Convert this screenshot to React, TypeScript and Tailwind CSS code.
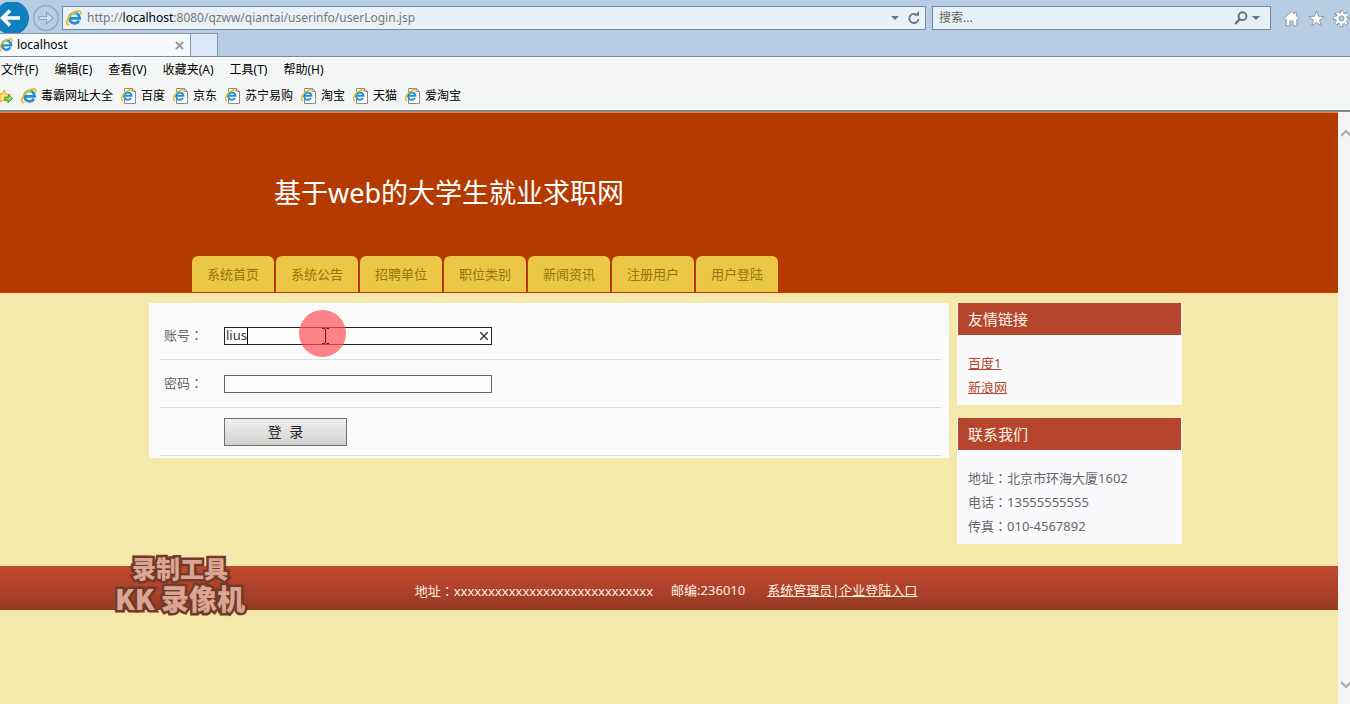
import { useState } from "react";

const menus = ["文件(F)", "编辑(E)", "查看(V)", "收藏夹(A)", "工具(T)", "帮助(H)"];
const favorites = ["百度", "京东", "苏宁易购", "淘宝", "天猫", "爱淘宝"];
const navs = ["系统首页", "系统公告", "招聘单位", "职位类别", "新闻资讯", "注册用户", "用户登陆"];
const contacts = [
  { label: "地址", value: "北京市环海大厦1602" },
  { label: "电话", value: "13555555555" },
  { label: "传真", value: "010-4567892" },
];

function IeLogo({ className }: { className?: string }) {
  return (
    <svg viewBox="0 0 16 16" className={className} fill="none">
      <path d="M13 10.800a5.200 5.200 0 1 1 .7-2.400H4.200" stroke="#2390d6" strokeWidth="2.800" />
      <path d="M4.200 5.800a5.200 5.200 0 0 1 7-1.400" stroke="#7accf2" strokeWidth="1" />
      <path d="M3.500 14.900C-1.500 14.500 1.500 7.500 6 3.800 10.500.2 15.800-.4 14.800 4.200" stroke="#f0bd1e" strokeWidth="1.800" />
    </svg>
  );
}

function PageIcon() {
  return (
    <svg viewBox="0 0 16 16" className="w-4 h-4" fill="none">
      <path d="M3.500.5h8l3 3v12h-11z" fill="#fff" stroke="#8c8c8c" />
      <path d="M11.500.5v3h3" stroke="#8c8c8c" />
      <path d="M10 10a3.700 3.700 0 1 1 .5-2.200H3.500" stroke="#2390d6" strokeWidth="2" />
      <path d="M2 12.800C-1.500 11.500 1.500 6 5 3.500 8 1.300 11.800.8 11 4" stroke="#f0bd1e" strokeWidth="1.500" />
    </svg>
  );
}

// full-width colon that sits in the middle of its cell
function Colon() {
  return <span className="font-['Noto_Sans_CJK_TC',sans-serif]">：</span>;
}

function Browser() {
  return (
    <div className="font-['Noto_Sans','Noto_Sans_CJK_SC',sans-serif] text-xs text-black">
      <div className="bg-[#b7cde4]">
        <div className="flex h-[33px] items-center pt-[3px]">
          <button type="button" aria-label="后退" className="w-[29px] h-[33px] shrink-0 overflow-hidden">
            <svg viewBox="0 0 29 33" className="w-[29px] h-[33px]">
              <circle cx="12" cy="16" r="17" fill="#0f80bd" />
              <path d="M20 16H3M10 8.500L2.500 16l7.500 7.500" fill="none" stroke="#fff" strokeWidth="3.500" />
            </svg>
          </button>
          <button type="button" aria-label="前进" className="w-[33px] h-[33px] shrink-0 flex items-center pl-1">
            <svg viewBox="0 0 26 26" className="w-[26px] h-[26px]" fill="none" stroke="#8ba6c2">
              <circle cx="13" cy="13" r="12.300" strokeWidth="1.300" />
              <path d="M6 11.500h7.500V7l6.500 6-6.500 6v-4.500H6z" fill="#d3e0ee" strokeWidth="1.200" />
            </svg>
          </button>
          <div className="flex h-6 flex-1 items-center border border-[#7189a2] bg-[#e9f1f6] pl-[3px] pr-1">
            <IeLogo className="w-4 h-4 shrink-0" />
            <p className="flex-1 pl-[5px] text-[#777]">
              http://<span className="text-black">localhost</span>:8080/qzww/qiantai/userinfo/userLogin.jsp
            </p>
            <svg viewBox="0 0 8 4" className="w-2 h-1 mr-2" fill="#6b737b">
              <path d="M0 0h8L4 4z" />
            </svg>
            <svg viewBox="0 0 14 14" className="w-[14px] h-[14px]" fill="none">
              <path d="M11.500 8A4.600 4.600 0 1 1 9 3.300" stroke="#6b737b" strokeWidth="1.800" />
              <path d="M7.200 4.800h4.800V0z" fill="#6b737b" />
            </svg>
          </div>
          <div className="ml-[6px] flex h-6 w-[339px] items-center border border-[#7189a2] bg-[#e6f0f5] px-[6px]">
            <input aria-label="搜索" placeholder="搜索..." className="min-w-0 flex-1 bg-transparent outline-none placeholder:text-[#666]" />
            <svg viewBox="0 0 14 14" className="w-[14px] h-[14px] mr-1" fill="none" stroke="#6b737b" strokeWidth="2">
              <circle cx="8.500" cy="5.200" r="3.900" />
              <path d="M5.800 8.200L1.200 13" strokeWidth="2.400" />
            </svg>
            <svg viewBox="0 0 8 4" className="w-2 h-1 mr-1" fill="#6b737b">
              <path d="M0 0h8L4 4z" />
            </svg>
          </div>
          <div className="ml-3 flex w-[67px] shrink-0 items-center gap-2 overflow-hidden">
            <svg viewBox="0 0 18 18" className="w-[17px] h-[17px] shrink-0" fill="#fdfdf8" stroke="#8796a6">
              <path d="M9 1.200L1 9l1.500 1.300.8-.7v7.100h4v-5h3.400v5h4V9.600l.8.7L17 9l-2.500-2.500V2.500h-2.200v1.800z" />
            </svg>
            <svg viewBox="0 0 18 18" className="w-[17px] h-[17px] shrink-0" fill="#fdfdf8" stroke="#8796a6">
              <path d="M9 1l2.100 5.600 6 .3-4.700 3.700 1.600 5.900L9 13.200l-5 3.300 1.600-5.900L.9 6.900l6-.3z" />
            </svg>
            <svg viewBox="0 0 18 18" className="w-[17px] h-[17px] shrink-0" fill="none">
              <circle cx="9" cy="9" r="7" stroke="#8796a6" strokeWidth="3.600" strokeDasharray="3.500 1.998" strokeDashoffset="1.750" />
              <circle cx="9" cy="9" r="5.800" stroke="#8796a6" strokeWidth="1.600" />
              <circle cx="9" cy="9" r="6.500" stroke="#fdfdf8" strokeWidth="3" strokeDasharray="2 3.105" strokeDashoffset="1" />
              <circle cx="9" cy="9" r="4.300" stroke="#fdfdf8" strokeWidth="3" />
              <circle cx="9" cy="9" r="2.700" stroke="#8796a6" />
            </svg>
          </div>
        </div>
        <div className="flex h-6 border-b border-[#7d8894]">
          <div className="flex w-[191px] items-center border-t border-r border-[#8297ad] bg-[#f6f9fb] pr-[6px]">
            <IeLogo className="w-[14px] h-[14px] -ml-px" />
            <span className="flex-1 pl-1">localhost</span>
            <button type="button" aria-label="关闭标签页">
              <svg viewBox="0 0 10 10" className="w-[9px] h-[9px]" stroke="#929292" strokeWidth="2">
                <path d="M1 1l8 8M9 1L1 9" />
              </svg>
            </button>
          </div>
          <button type="button" aria-label="新建标签页" className="w-[27px] border-t border-r border-[#8297ad] bg-[#dce8f8]"></button>
        </div>
      </div>
      <div className="border-b-2 border-[#85888a] bg-[#f4f6f5]">
        <div className="flex h-6 items-center gap-4 border-t-2 border-[#fafdfd] pl-px">
          {menus.map((m) => (
            <button type="button" key={m}>{m}</button>
          ))}
        </div>
        <div className="flex h-[29px] items-center gap-2">
          <svg viewBox="0 0 14 16" className="w-[13px] h-4" strokeLinejoin="round">
            <path d="M4.500 1.500L6.500 6l5 .4-3.800 3.400 1.200 5-4.400-2.500L0 14.500V5.500L2.500 6z" fill="#ffe27a" stroke="#e0981b" />
            <path d="M5 9.200h4V6.800l4.500 4-4.500 4v-2.400H5z" fill="#8fd85c" stroke="#43942a" />
          </svg>
          <a href="#" className="flex items-center gap-1">
            <IeLogo className="w-4 h-4" />毒霸网址大全
          </a>
          {favorites.map((f) => (
            <a href="#" key={f} className="flex items-center gap-1">
              <PageIcon />{f}
            </a>
          ))}
        </div>
      </div>
    </div>
  );
}

function SideBox({ title, children }: { title: string; children: React.ReactNode }) {
  return (
    <div className="border-x border-[#fafafd] bg-[#fafafd]">
      <h2 className="flex h-8 items-center bg-[#b5462d] px-[10px] text-[15px] text-[#fff3e6]">{title}</h2>
      <div className="px-[10px] pt-4 pb-[6px] leading-6">{children}</div>
    </div>
  );
}

function LoginForm() {
  const [name, setName] = useState("lius");
  const [pwd, setPwd] = useState("");

  return (
    <form className="h-fit w-[800px] bg-[#fbfbfb] pt-2 pr-2 pb-[2px] pl-[11px]">
      <div className="flex h-[49px] items-center border-b border-[#dedede] pt-px pl-1">
        <label htmlFor="name" className="w-[60px]">账号<Colon /></label>
        <div className="relative flex h-[18px] w-[268px] items-center border border-[#222] bg-[#fdfffd] px-px">
          <input id="name" value={name} onChange={(e) => setName(e.target.value)} className="min-w-0 flex-1 text-[#333] outline-none" />
          <button type="button" aria-label="清除" className="mr-[2px]" onClick={() => setName("")}>
            <svg viewBox="0 0 8 8" className="w-2 h-2" stroke="#333" strokeWidth="1.400">
              <path d="M0 0l8 8M8 0L0 8" />
            </svg>
          </button>
          {/* text caret */}
          <i className="absolute left-[22px] top-0 h-4 w-px bg-black"></i>
          {/* mouse click spot */}
          <div className="pointer-events-none absolute left-[74px] -top-[18px] h-[47px] w-[47px] rounded-full bg-[#ff4f56]/70"></div>
          <svg viewBox="0 0 7 16" className="pointer-events-none absolute left-[97px] top-0 h-4 w-[7px]" fill="none" stroke="#5c1a1c">
            <path d="M0 .5h2.500l1 1 1-1H7M3.500 1v14M0 15.500h2.500l1-1 1 1H7" />
          </svg>
        </div>
      </div>
      <div className="flex h-12 items-center border-b border-[#dedede] pl-1">
        <label htmlFor="pwd" className="w-[60px]">密码<Colon /></label>
        <input id="pwd" type="password" value={pwd} onChange={(e) => setPwd(e.target.value)} className="h-[18px] w-[268px] border border-[#666] bg-[#fdfffd] px-[2px] outline-none" />
      </div>
      <div className="flex h-12 items-center border-b border-[#dedede] pt-px pl-16">
        <button type="submit" className="h-7 w-[123px] border border-[#707070] bg-linear-to-b from-[#efefef] to-[#d2d2d0] text-sm leading-6 whitespace-pre text-[#222]">登  录</button>
      </div>
    </form>
  );
}

export default function App() {
  return (
    <div className="flex h-screen flex-col overflow-hidden">
      <Browser />
      <div className="flex min-h-0 flex-1">
        <div className="flex-1 overflow-hidden bg-[#f5e8ab] font-['Noto_Sans','Noto_Sans_CJK_SC',sans-serif] text-[13px] text-[#666]">
          <header className="border-t border-[#e08a55] bg-[#b53a00]">
            <div className="mx-auto max-w-[1040px]">
              <h1 className="flex h-[143px] items-center pt-[18px] pl-[125px] text-[27px] text-white">基于web的大学生就业求职网</h1>
              <nav className="flex gap-[2px] pb-px pl-[43px]">
                {navs.map((n) => (
                  <a href="#" key={n} className="flex h-9 w-[82px] items-center justify-center rounded-t-md bg-[#ecc746] pt-[2px] text-[#94740c]">{n}</a>
                ))}
              </nav>
            </div>
          </header>
          <div className="mx-auto flex max-w-[1040px] gap-2 pt-[10px] pb-[22px]">
            <LoginForm />
            <aside className="flex w-[225px] flex-col gap-[13px]">
              <SideBox title="友情链接">
                <ul className="text-[#b5462d] underline">
                  <li><a href="#">百度1</a></li>
                  <li><a href="#">新浪网</a></li>
                </ul>
              </SideBox>
              <SideBox title="联系我们">
                {contacts.map((c) => (
                  <p key={c.label}>{c.label}<Colon />{c.value}</p>
                ))}
              </SideBox>
            </aside>
          </div>
          <footer className="relative bg-linear-to-b from-[#c0492b] via-[#b0422c] to-[#923a20] text-[#fff0e0]">
            <div className="flex h-11 items-center justify-center pt-[6px] pr-[6px]">
              <span>地址<Colon />xxxxxxxxxxxxxxxxxxxxxxxxxxxxx</span>
              <span className="pl-[18px]">邮编:236010</span>
              <a href="#" className="pl-[22px] underline">系统管理员|企业登陆入口</a>
            </div>
            <div className="pointer-events-none absolute -top-3 left-[113px] flex w-[134px] flex-col items-center font-['Noto_Sans_CJK_SC',sans-serif] font-black text-[#dba595] [-webkit-text-stroke:5px_#743a28] [paint-order:stroke]">
              <span className="text-2xl leading-7">录制工具</span>
              <span className="text-[28px] leading-8 whitespace-nowrap">KK 录像机</span>
            </div>
          </footer>
        </div>
        <div className="flex w-3 flex-col items-end justify-between overflow-hidden bg-[#f4f4f6] pt-[18px] pb-4">
          <svg viewBox="0 0 9 7" className="w-[9px] h-[7px]" fill="none" stroke="#a8a8a8" strokeWidth="2">
            <path d="M0 6l5-5 5 5" />
          </svg>
          <svg viewBox="0 0 9 7" className="w-[9px] h-[7px]" fill="none" stroke="#a8a8a8" strokeWidth="2">
            <path d="M0 1l5 5 5-5" />
          </svg>
        </div>
      </div>
    </div>
  );
}
